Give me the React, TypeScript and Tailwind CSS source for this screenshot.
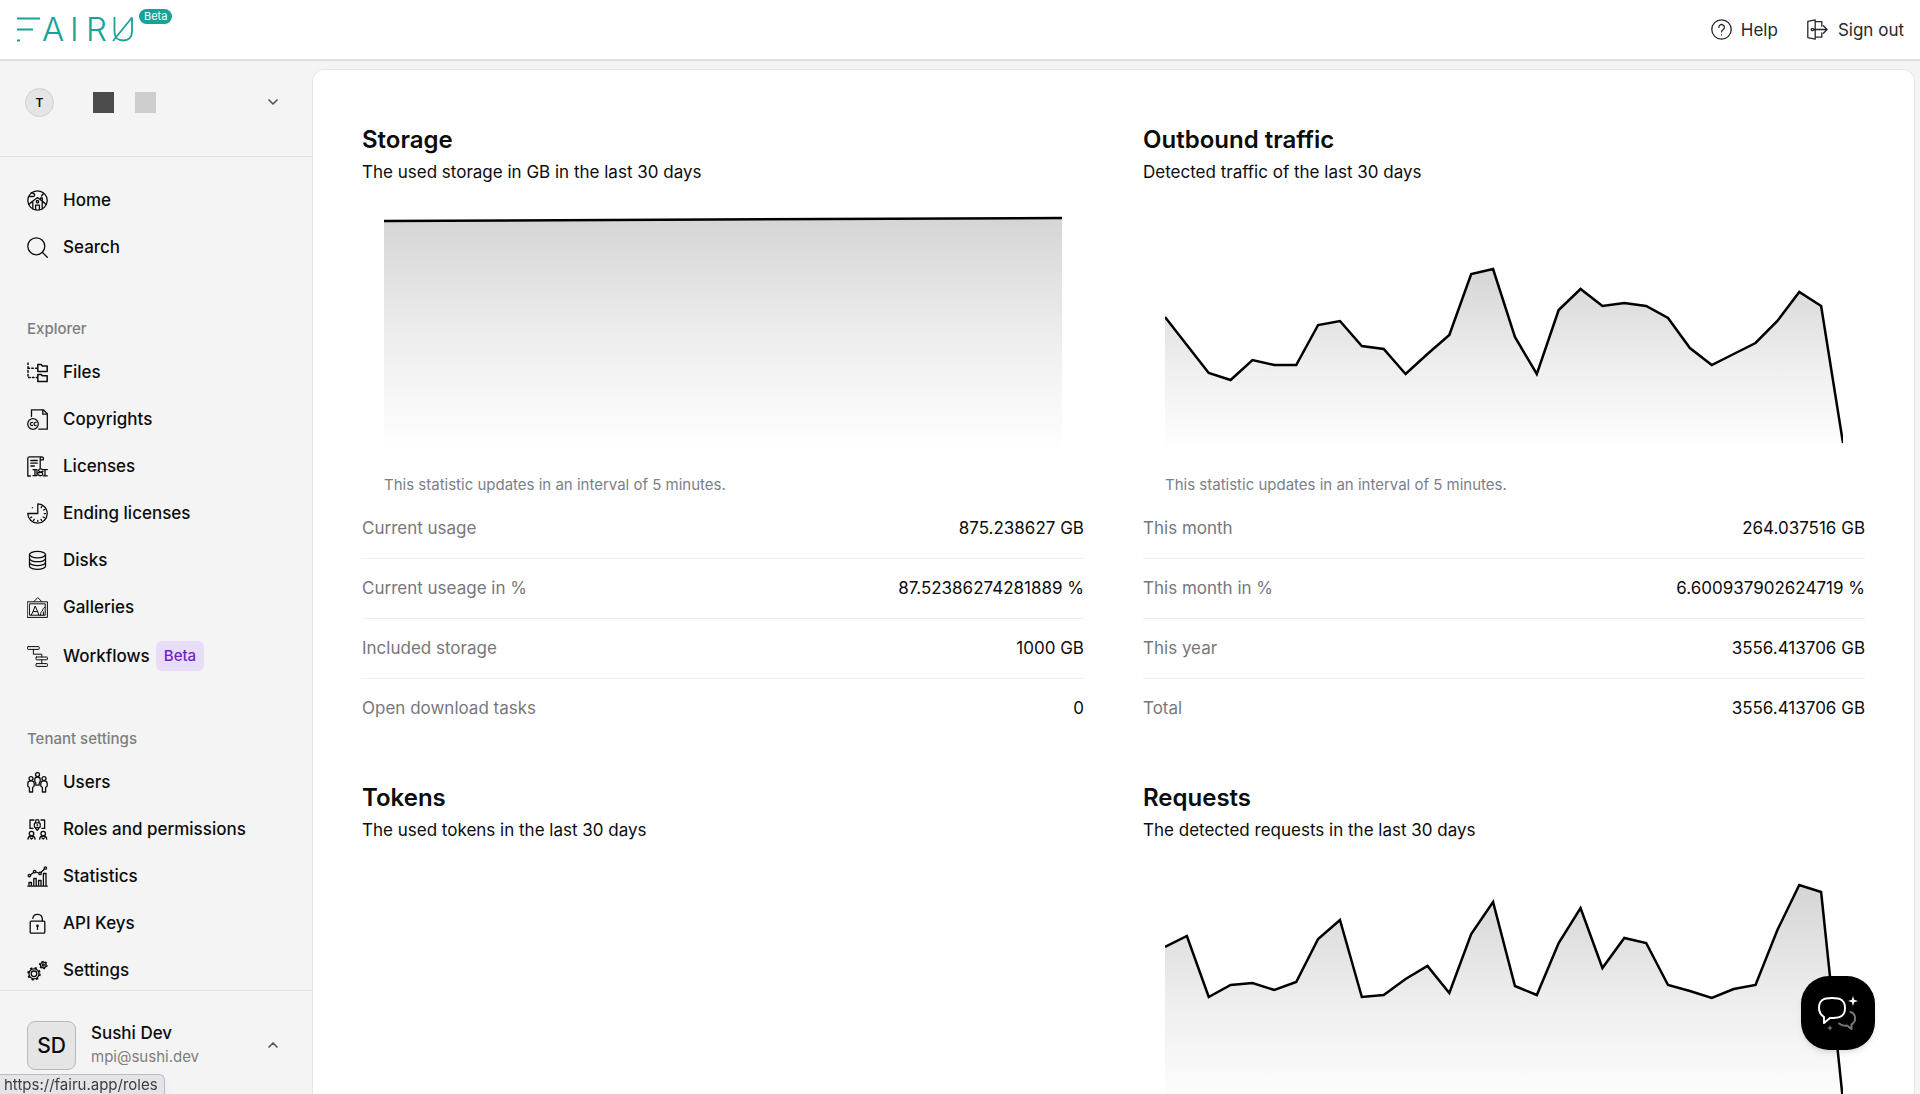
import type { ReactNode } from "react";
import { ChevronDown, ChevronUp } from "lucide-react";

type Row = { label: string; value: string };

type Stat = {
  title: string;
  description: string;
  points: number[];
  rows: Row[];
};

const CHART_WIDTH = 678;
const CHART_HEIGHT = 256;

// y positions inside the chart, one per day
const stats: Stat[] = [
  {
    title: "Storage",
    description: "The used storage in GB in the last 30 days",
    points: [25, 22],
    rows: [
      { label: "Current usage", value: "875.238627 GB" },
      { label: "Current useage in %", value: "87.52386274281889 %" },
      { label: "Included storage", value: "1000 GB" },
      { label: "Open download tasks", value: "0" },
    ],
  },
  {
    title: "Outbound traffic",
    description: "Detected traffic of the last 30 days",
    points: [
      121, 149, 177, 184, 164, 169, 169, 129, 125, 150, 153, 178, 158, 139, 78, 73,
      141, 178, 114, 93, 110, 107, 110, 122, 152, 169, 158, 147, 125, 96, 110, 247,
    ],
    rows: [
      { label: "This month", value: "264.037516 GB" },
      { label: "This month in %", value: "6.600937902624719 %" },
      { label: "This year", value: "3556.413706 GB" },
      { label: "Total", value: "3556.413706 GB" },
    ],
  },
  {
    title: "Tokens",
    description: "The used tokens in the last 30 days",
    points: [],
    rows: [],
  },
  {
    title: "Requests",
    description: "The detected requests in the last 30 days",
    points: [
      93, 82, 143, 131, 129, 136, 128, 85, 66, 143, 141, 125, 112, 139, 80, 48,
      132, 141, 89, 54, 114, 84, 89, 131, 137, 144, 135, 131, 76, 31, 38, 247,
    ],
    rows: [],
  },
];

function Icon({ children, thin }: { children: ReactNode; thin?: boolean }) {
  return (
    <svg
      viewBox="0 0 21 21"
      className="size-[21px] shrink-0"
      fill="none"
      stroke="currentColor"
      strokeWidth={thin ? 1 : 1.3}
      strokeLinecap="round"
      strokeLinejoin="round"
      aria-hidden="true"
    >
      {children}
    </svg>
  );
}

const HomeIcon = () => (
  <Icon>
    <circle cx="10.5" cy="10.5" r="9.7" />
    <path d="M2 6.5h4.2a1.5 1.5 0 0 0 0-3 2 2 0 0 0-2-.8M14.5 6l2-2.5M4 12.6l6.5-5 6.5 5M13.5 9V8h1.8v2.7" />
    <path d="M5.8 12v6.8M15.2 12v6.8M8.6 19.5v-4.3h3.8v4.3" />
    <circle cx="10.5" cy="11.7" r="1.2" />
    <path d="M1.8 14.5l3-2.4M19.2 14.5l-3-2.4" />
  </Icon>
);

const SearchIcon = () => (
  <Icon>
    <circle cx="9.3" cy="9.3" r="8.5" />
    <path d="M15.5 15.5l4.8 4.8" />
  </Icon>
);

const FilesIcon = () => (
  <Icon>
    <path d="M1 1v14.6h9M1 6.2h9" strokeDasharray="1.6 2.2" strokeWidth="1.5" />
    <path d="M10.8 2.6h3.4l1.2 1.4h4.8v5.4h-9.4zM10.8 12.4h3.4l1.2 1.4h4.8v5.6h-9.4z" strokeWidth="1.5" />
  </Icon>
);

const CopyrightsIcon = () => (
  <Icon>
    <path d="M4.5 7.5V.8h11.8l4 4v15.4h-8.5" />
    <path d="M15.8.8v4.4h4.4" />
    <circle cx="6" cy="15" r="5.3" />
    <path d="M5.4 13.4a1.6 1.6 0 1 0 0 3.1M9 13.4a1.6 1.6 0 1 0 0 3.1" />
  </Icon>
);

const LicensesIcon = () => (
  <Icon>
    <path d="M3.4 20H.8V2.5A1.8 1.8 0 0 1 2.6.8h12a1.8 1.8 0 0 1 1.8 1.8v1.2h-3.2V12M13.2 3.5V2.4a1.6 1.6 0 0 1 1.4-1.6" />
    <path d="M3.8 4.5h6.5M3.8 7.2h6.5M3.8 10h3.6M6 13.6h4v6H6M8 13.6v6M20.3 13.6h-4M20.3 19.8h-4M18 13.6v6" />
    <path d="M15.6 13.8c-1-1.4-4-1-4 .6 0 2 4.2 1.6 4.2 3.6 0 2-3.6 2.4-4.6.6M10.5 17l5.5-1.5" />
  </Icon>
);

const EndingIcon = () => (
  <Icon>
    <path d="M10.8.8a9.7 9.7 0 1 1-10 9.7h10z" />
    <path d="M14.8 3.6l-.6 1M17.6 6.4l-1 .6M18.4 10.6h-1.2M17.2 14.6l-1-.6M14.6 17.4l-.6-1M10.8 18.6v-1.2M6.6 17.4l.6-1M3.8 14.6l1-.6M5.4 4.6v.1" />
  </Icon>
);

const DisksIcon = () => (
  <Icon>
    <ellipse cx="10.5" cy="4.6" rx="8" ry="3.2" />
    <path d="M2.5 4.6v11.6c0 1.8 3.6 3.2 8 3.2s8-1.4 8-3.2V4.6" />
    <path d="M2.5 8.5c0 1.8 3.6 3.2 8 3.2s8-1.4 8-3.2M2.5 12.4c0 1.8 3.6 3.2 8 3.2s8-1.4 8-3.2" />
  </Icon>
);

const GalleriesIcon = () => (
  <Icon thin>
    <path d="M.6 4.8h19.8v15.6H.6zM2.8 6.8h15.4v11.4H2.8zM6.8 4.6l4-4 4 4" />
    <path d="M4.2 18l1.8-3.4L8.2 9l2.4 5.6 1.2 3.4M6.2 14.6h4.2M13.6 18c0-2 .4-3.6 1.8-4 .4-2 1-3.4 2.6-3.8M16.4 18v-3" />
  </Icon>
);

const WorkflowsIcon = () => (
  <Icon thin>
    <rect x=".6" y=".6" width="11.6" height="2.8" rx=".6" />
    <rect x="9" y="11" width="11.4" height="2.8" rx=".6" />
    <rect x="9" y="17.6" width="11.4" height="2.8" rx=".6" />
    <path d="M6.4 3.4v4.8h8.4V11M14.8 13.8v3.8" />
  </Icon>
);

const UsersIcon = () => (
  <Icon>
    <circle cx="10.5" cy="2.6" r="2" />
    <circle cx="4" cy="6.6" r="2" />
    <circle cx="17" cy="6.6" r="2" />
    <path d="M8.8 13.2V10.8L7.8 9.6V7.4c0-1.6 1-2.4 2.7-2.4s2.7.8 2.7 2.4v2.2l-1 1.2v2.4z" />
    <path d="M2.4 20v-4.4L.8 14v-2.6c0-1.7 1.4-2.6 3.2-2.6s3.2.9 3.2 2.6V14l-1.6 1.6V20zM15.4 20v-4.4L13.8 14v-2.6c0-1.7 1.4-2.6 3.2-2.6s3.2.9 3.2 2.6V14l-1.6 1.6V20z" />
  </Icon>
);

const RolesIcon = () => (
  <Icon>
    <path d="M6 9.4H3V1h4M15 9.4h2.6V1H14M8.6 9.4l1.6 2 1.6-2" />
    <rect x="7.4" y="3.8" width="5.8" height="4.8" rx="1" />
    <path d="M8.6 3.6V2.4a1.7 1.7 0 0 1 3.4 0v1.2M10.3 5.6v1.2" />
    <circle cx="4.5" cy="14.6" r="2.3" />
    <circle cx="16.2" cy="14.6" r="2.3" />
    <path d="M1 20.2c0-2 1.400-3.200 3.500-3.200S8 18.200 8 20.200M12.700 20.200c0-2 1.400-3.200 3.500-3.200s3.500 1.200 3.500 3.200M3.400 19l1.100 1 1.100-1M15.100 19l1.100 1 1.100-1" />
  </Icon>
);

const StatisticsIcon = () => (
  <Icon>
    <path d="M.8 20.2h19.5M2 20v-3.5h2.4V20M6.800 20v-7.500h2.400V20M11.600 20v-5.500H14V20M16.400 20V7.500H19V20" />
    <circle cx="2.4" cy="9.6" r="1.2" />
    <circle cx="7.6" cy="5.6" r="1.2" />
    <circle cx="13" cy="7.4" r="1.2" />
    <circle cx="18.4" cy="2" r="1.2" />
    <path d="M3.4 8.9l3.200-2.500M8.800 6l3 1M13.900 6.500L17.500 3" />
  </Icon>
);

const KeysIcon = () => (
  <Icon>
    <rect x="3.2" y="8.2" width="14.6" height="12" rx="1" />
    <path d="M5.8 5.400a4.800 4.800 0 0 1 9.500.4V8M10.500 13.400v3" />
    <circle cx="10.5" cy="12.8" r=".7" />
  </Icon>
);

const SettingsIcon = () => (
  <Icon>
    <circle cx="7" cy="13.8" r="2.8" />
    <circle cx="7" cy="13.8" r="5" />
    <circle cx="7" cy="13.8" r="6" strokeDasharray="2.35 2.35" strokeWidth="1.6" strokeLinecap="butt" />
    <circle cx="16.3" cy="5" r="1" />
    <circle cx="16.3" cy="5" r="2.8" />
    <circle cx="16.3" cy="5" r="3.7" strokeDasharray="1.9 1.9" strokeLinecap="butt" />
  </Icon>
);

const HelpIcon = () => (
  <Icon>
    <circle cx="10.5" cy="10.5" r="9.7" />
    <path d="M7.8 8.400a2.800 2.800 0 1 1 4.400 2.200c-1 .7-1.700 1.100-1.700 2.400M10.500 15.600v.2" />
  </Icon>
);

const SignOutIcon = () => (
  <Icon>
    <path d="M.8 2.400L8.200.8v19.400L.8 18.600zM8.200 2.600h6.600v4.600M8.200 18.200h6.600v-4.400" />
    <path d="M7 10.500h13M16.400 6.800l3.700 3.700-3.700 3.700" />
    <circle cx="5.4" cy="10.5" r="1.2" />
  </Icon>
);

type NavItem = { label: string; icon: () => ReactNode; beta?: boolean };

const mainNav: NavItem[] = [
  { label: "Home", icon: HomeIcon },
  { label: "Search", icon: SearchIcon },
];

const explorerNav: NavItem[] = [
  { label: "Files", icon: FilesIcon },
  { label: "Copyrights", icon: CopyrightsIcon },
  { label: "Licenses", icon: LicensesIcon },
  { label: "Ending licenses", icon: EndingIcon },
  { label: "Disks", icon: DisksIcon },
  { label: "Galleries", icon: GalleriesIcon },
  { label: "Workflows", icon: WorkflowsIcon, beta: true },
];

const tenantNav: NavItem[] = [
  { label: "Users", icon: UsersIcon },
  { label: "Roles and permissions", icon: RolesIcon },
  { label: "Statistics", icon: StatisticsIcon },
  { label: "API Keys", icon: KeysIcon },
  { label: "Settings", icon: SettingsIcon },
];

function NavGroup({ title, items }: { title?: string; items: NavItem[] }) {
  return (
    <div>
      {title && <h2 className="mb-2 text-[15px] leading-6 font-medium text-[#7d7d80]">{title}</h2>}
      <ul>
        {items.map(({ label, icon: ItemIcon, beta }) => (
          <li key={label}>
            <a href="#" className="flex items-center gap-[15px] py-[10px] text-[17px] leading-[27px] font-medium">
              <ItemIcon />
              <span className="flex items-center gap-[6px]">
                {label}
                {beta && (
                  <span className="rounded-md bg-[#e8ddf9] px-2 text-[15px] leading-[30px] text-[#7420c8]">Beta</span>
                )}
              </span>
            </a>
          </li>
        ))}
      </ul>
    </div>
  );
}

function Logo() {
  return (
    <svg
      viewBox="0 -8 117 42"
      className="h-[42px] w-[117px]"
      fill="none"
      stroke="#17a398"
      strokeWidth="1.8"
      role="img"
      aria-label="Fairu"
    >
      <path d="M0 1.500h23M0 12.500h16M0 23.500h3" />
      <g fill="#17a398" stroke="none" fontFamily="Inter, sans-serif" fontSize="33" fontWeight="300">
        <text x="25" y="24">A</text>
        <text x="53" y="24">I</text>
        <text x="69" y="24">R</text>
      </g>
      <path d="M97.500 0v15c0 5.500 3.500 8.500 8.800 8.500s8.700-3.500 8.700-8.500V.500L96 24" strokeLinejoin="bevel" />
    </svg>
  );
}

function AreaChart({ points, id }: { points: number[]; id: string }) {
  if (points.length === 0) {
    return <div className="h-64" />;
  }
  const step = CHART_WIDTH / (points.length - 1);
  const line = points.map((y, i) => `${i === 0 ? "M" : "L"}${i * step} ${y}`).join(" ");
  return (
    <svg
      viewBox={`0 0 ${CHART_WIDTH} ${CHART_HEIGHT}`}
      preserveAspectRatio="none"
      className="block h-64 w-full"
      aria-hidden="true"
    >
      <defs>
        <linearGradient id={id} x1="0" y1="0" x2="0" y2="1">
          <stop offset="0" stopColor="#000" stopOpacity="0.165" />
          <stop offset="0.5" stopColor="#000" stopOpacity="0.07" />
          <stop offset="1" stopColor="#000" stopOpacity="0" />
        </linearGradient>
      </defs>
      <path d={`${line} V${CHART_HEIGHT} H0 Z`} fill={`url(#${id})`} />
      <path d={line} fill="none" stroke="#000" strokeWidth="2.5" vectorEffect="non-scaling-stroke" />
    </svg>
  );
}

function StatCard({ stat }: { stat: Stat }) {
  return (
    <section>
      <h2 className="text-2xl leading-8 font-semibold">{stat.title}</h2>
      <p className="text-[17px] leading-8">{stat.description}</p>
      <div className="px-[22px] pt-2">
        <AreaChart points={stat.points} id={`fill-${stat.title.split(" ")[0]}`} />
        <p className="pt-[21px] text-[15px] leading-6 text-[#7b7f87]">
          This statistic updates in an interval of 5 minutes.
        </p>
      </div>
      <dl className="mt-[2px] divide-y divide-[#efefef]">
        {stat.rows.map((row) => (
          <div key={row.label} className="flex justify-between py-4 text-[17px] leading-[27px]">
            <dt className="text-[#77777b]">{row.label}</dt>
            <dd>{row.value}</dd>
          </div>
        ))}
      </dl>
    </section>
  );
}

function ChatButton() {
  return (
    <button
      type="button"
      aria-label="Open chat"
      className="fixed right-[45px] bottom-11 flex size-[74px] items-center justify-center rounded-[28px] bg-black shadow-md"
    >
      <svg
        viewBox="0 0 40 36"
        className="h-9 w-10"
        fill="none"
        strokeWidth="2"
        strokeLinecap="round"
        strokeLinejoin="round"
        aria-hidden="true"
      >
        <path d="M14 3c9 0 13 2.500 13 10s-4 10-12 10h-3l-6 5v-6C3 20 1 17 1 13 1 5.500 5 3 14 3z" stroke="#fff" />
        <path d="M32.500 17c6 2 6 10 1 12.500V34l-4.500-3.500c-3 .5-6-.5-8-2" stroke="#777" />
        <path d="M35 1l1.200 3.800L40 6l-3.800 1.200L35 11l-1.200-3.800L30 6l3.800-1.200z" fill="#fff" />
        <path d="M12 30l.8 2.200L15 33l-2.200.8L12 36l-.8-2.200L9 33l2.200-.8z" fill="#777" />
      </svg>
    </button>
  );
}

export default function App() {
  return (
    <div className="flex h-screen flex-col overflow-hidden bg-[#f4f4f4] font-['Inter',sans-serif] text-[#0c0c0d]">
      <header className="flex h-[61px] shrink-0 items-center justify-between border-b-2 border-[#dedede] bg-white pr-4 pl-[17px]">
        <a href="#" className="flex items-start gap-[5px]">
          <Logo />
          <span className="rounded-full bg-[#17a398] px-[5px] text-[11px] leading-[15px] text-white">Beta</span>
        </a>
        <nav className="flex gap-[29px] text-[17px] leading-7 text-[#27272a]">
          <a href="#" className="flex items-center gap-[9px]">
            <HelpIcon />
            Help
          </a>
          <button type="button" className="flex items-center gap-[10px]">
            <SignOutIcon />
            Sign out
          </button>
        </nav>
      </header>

      <div className="flex min-h-0 flex-1">
        <aside className="flex w-[312px] shrink-0 flex-col">
          <button
            type="button"
            aria-label="Switch tenant"
            className="flex h-24 shrink-0 items-start border-b border-[#e4e4e4] pt-[27px] pr-[31px] pl-[25px]"
          >
            <span className="flex size-[29px] items-center justify-center rounded-full border border-[#cfcfcf] bg-[#e5e5e6] text-[12px] font-semibold">
              T
            </span>
            <span className="ml-[39px] flex gap-[21px] pt-1">
              <span className="size-[21px] bg-[#4b4b4b]" />
              <span className="size-[21px] bg-[#cdcdcd]" />
            </span>
            <ChevronDown className="mt-[6px] ml-auto size-4 text-[#555]" strokeWidth={2.5} />
          </button>
          <nav className="flex min-h-0 flex-1 flex-col gap-[46px] overflow-hidden px-[27px] pt-5">
            <NavGroup items={mainNav} />
            <NavGroup title="Explorer" items={explorerNav} />
            <NavGroup title="Tenant settings" items={tenantNav} />
          </nav>
          <button
            type="button"
            className="flex h-[104px] shrink-0 items-start gap-[15px] border-t border-[#e4e4e4] pt-[30px] pr-[31px] pl-[27px] text-left"
          >
            <span className="flex size-[49px] items-center justify-center rounded-lg border border-[#b9b9bb] bg-[#e5e5e6] text-[21px] font-medium">
              SD
            </span>
            <span className="flex flex-col">
              <span className="text-[17px] leading-6 font-medium">Sushi Dev</span>
              <span className="text-[15px] leading-6 text-[#7d7d80]">mpi@sushi.dev</span>
            </span>
            <ChevronUp className="mt-4 ml-auto size-4 text-[#555]" strokeWidth={2.5} />
          </button>
        </aside>

        <main className="mt-2 mr-[5px] min-w-0 flex-1 overflow-hidden rounded-t-xl border border-b-0 border-[#e6e6e6] bg-white px-[49px] pt-[54px]">
          <div className="grid grid-cols-2 gap-x-[59px] gap-y-11">
            {stats.map((stat) => (
              <StatCard key={stat.title} stat={stat} />
            ))}
          </div>
        </main>
      </div>

      <div className="fixed bottom-0 left-0 rounded-tr-md border-t border-r border-[#bcbcc0] bg-[#e4e4e8] pr-[6px] pl-1 text-[15px] leading-[19px] text-[#3c3c40] shadow-lg">
        https://fairu.app/roles
      </div>
      <ChatButton />
    </div>
  );
}
